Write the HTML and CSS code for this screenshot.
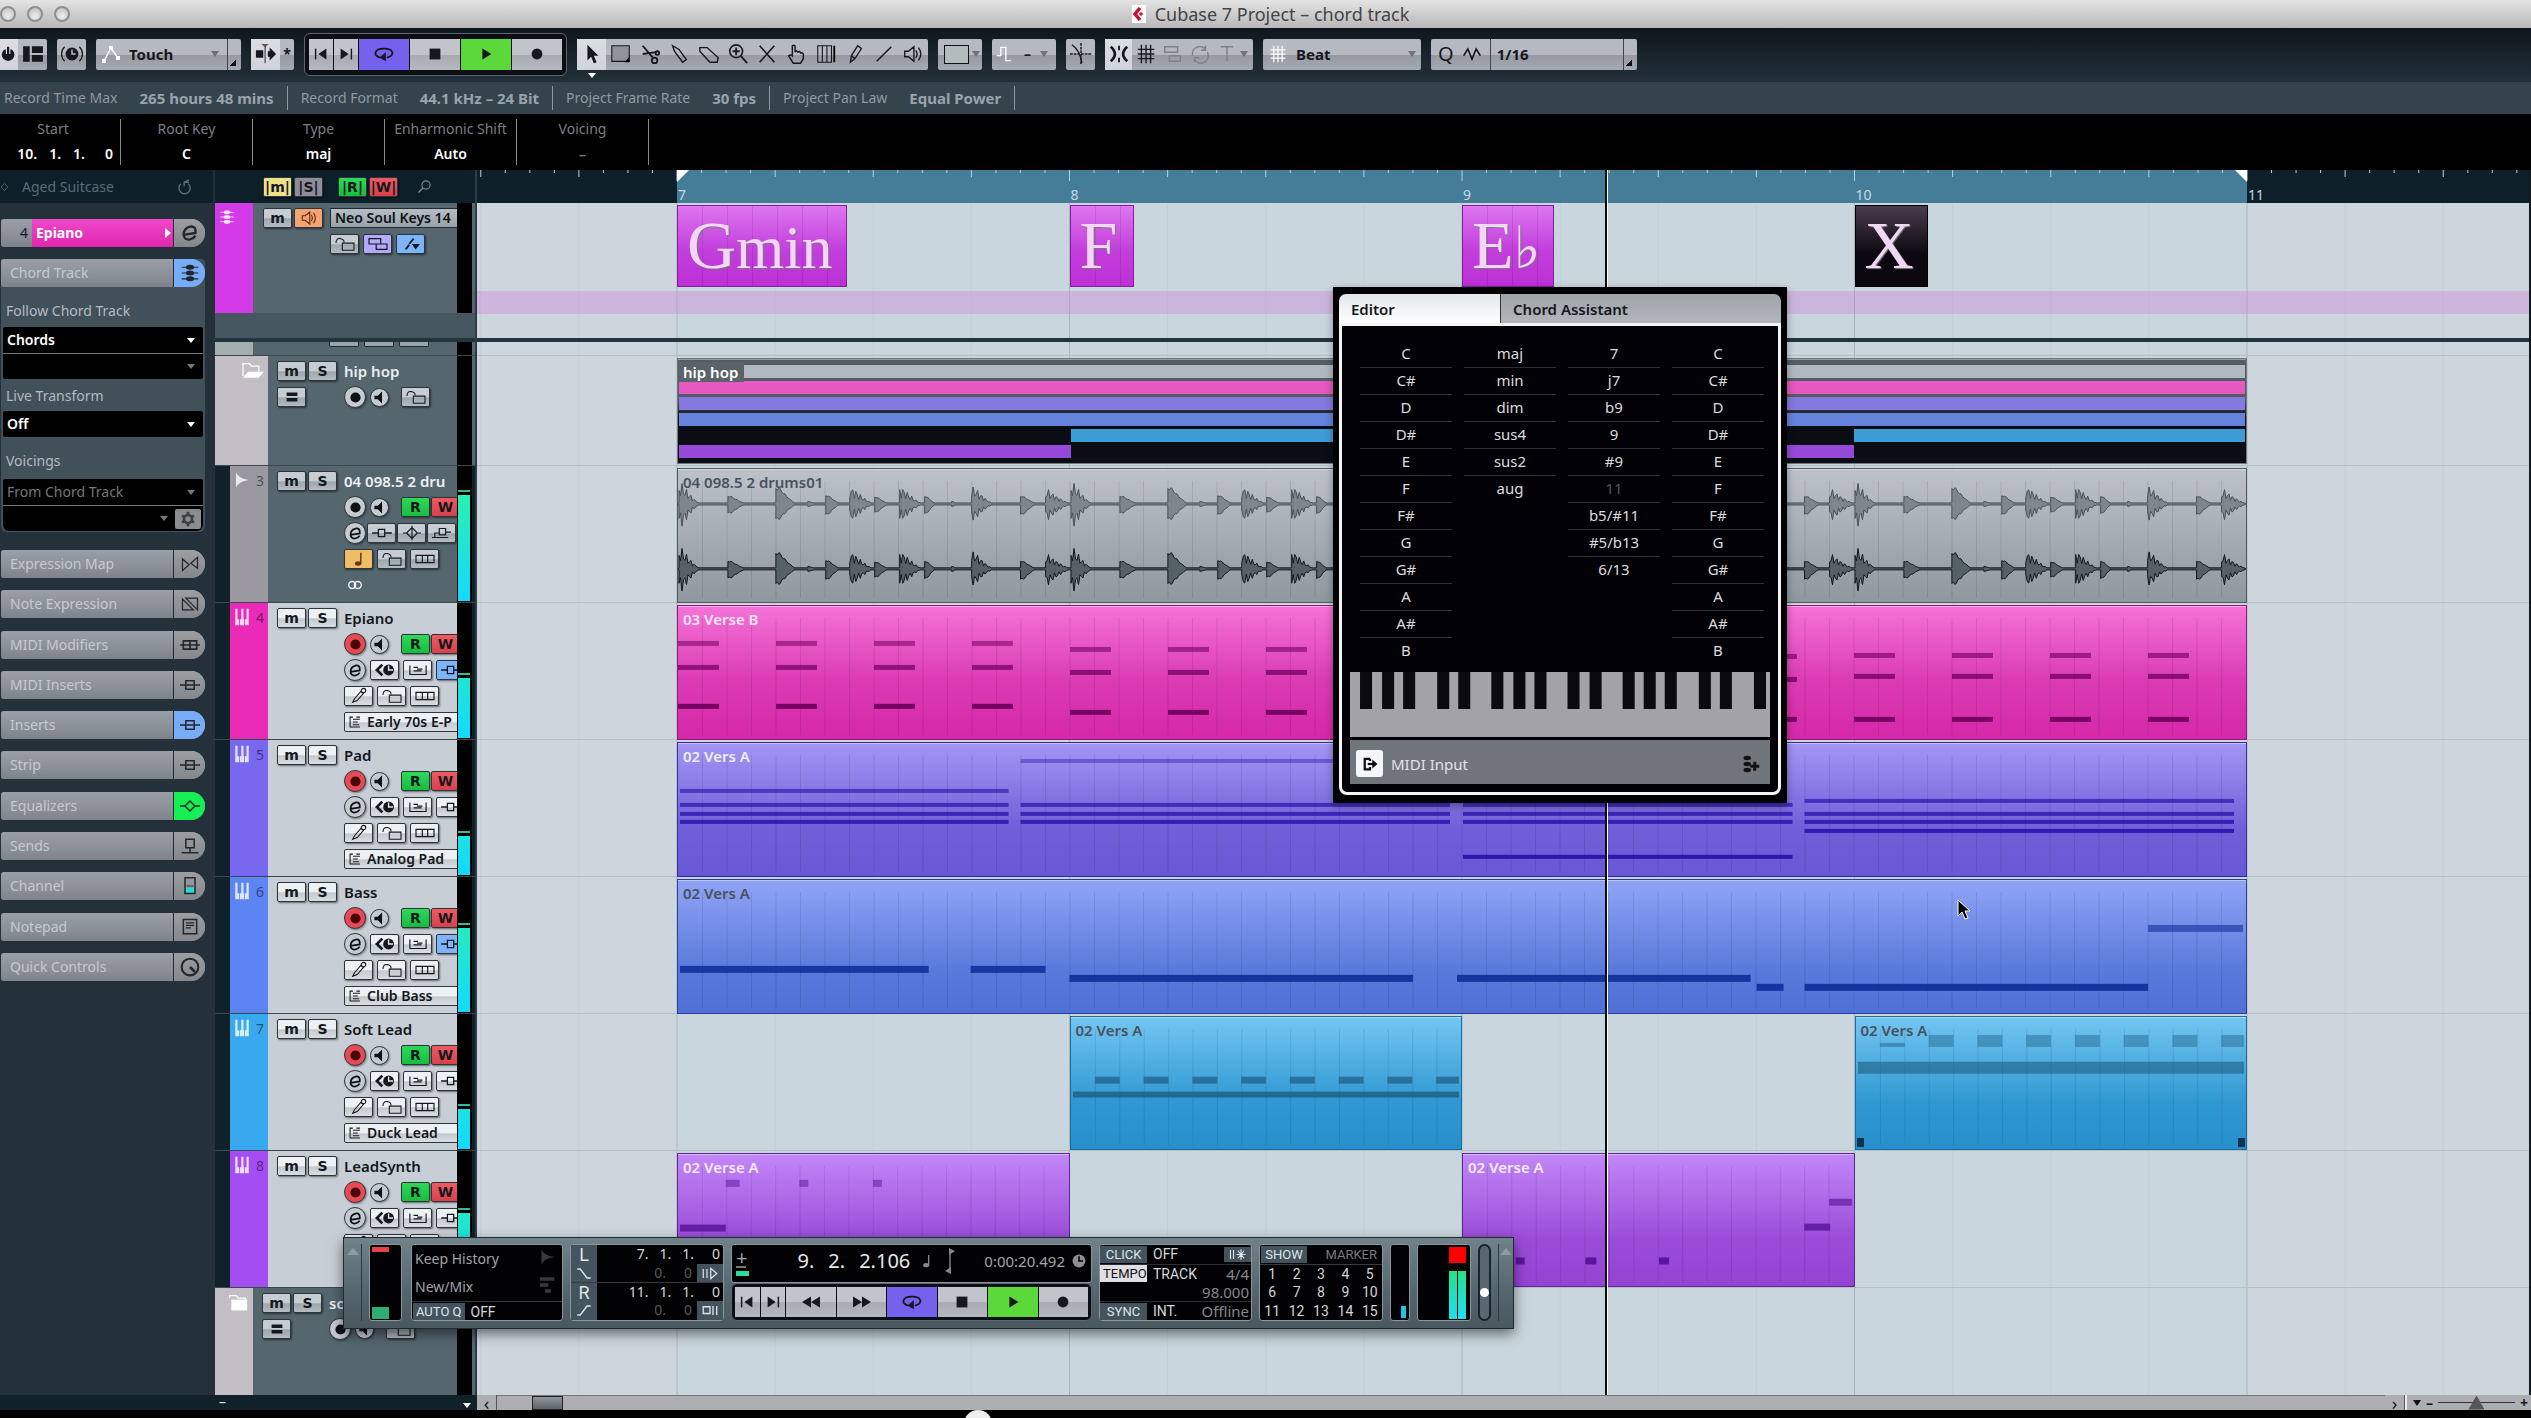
FILE: index.html
```html
<!DOCTYPE html>
<html lang="en">
<head>
  <meta charset="UTF-8" />
  <meta name="viewport" content="width=device-width, initial-scale=1.0" />
  <title>Cubase 7 Project – chord track</title>
  <link rel="stylesheet" href="styles.css">
</head>
<body>
  <!-- icon set -->
  <svg class="sprite" aria-hidden="true">
    <symbol id="i-power" viewBox="0 0 20 20"><path d="M5 5a7 7 0 1 0 8 0" fill="currentColor"/><path d="M9 1v9" stroke="#d6d9df" stroke-width="5"/><path d="M9 2v8" stroke="currentColor" stroke-width="2.5"/></symbol>
    <symbol id="i-layout" viewBox="0 0 20 20"><path d="M1 3h6v14H1zM9 3h10v6H9zM9 11h10v6H9z" fill="currentColor"/></symbol>
    <symbol id="i-clock" viewBox="0 0 24 24"><circle cx="12" cy="12" r="7" fill="currentColor"/><path d="M12 7v5h4" stroke="#b9bcc4" stroke-width="1.6" fill="none"/><path d="M4 4a11 11 0 0 0 0 16M20 4a11 11 0 0 1 0 16" stroke="currentColor" stroke-width="1.4" fill="none"/></symbol>
    <symbol id="i-watch" viewBox="0 0 20 20"><circle cx="10" cy="10" r="8" fill="currentColor"/><path d="M10 4v6h5" stroke="#000" stroke-width="2" fill="none"/></symbol>
    <symbol id="i-auto" viewBox="0 0 20 20"><path d="M3 17L10 4l7 10" stroke="#fff" stroke-width="1.4" fill="none"/><path d="M1 15h4v4H1zM8 2h4v4H8zM15 12h4v4h-4z" fill="#fff"/></symbol>
    <symbol id="i-scroll" viewBox="0 0 24 24"><path d="M1 8h8v8H1zM14 9h2V5l7 7-7 7v-4h-2z" fill="currentColor"/><path d="M11 4v18" stroke="currentColor"/><path d="M7 1h8l-4 4z" fill="#555"/></symbol>
    <symbol id="i-prev" viewBox="0 0 20 20"><path d="M4 4v12" stroke="currentColor" stroke-width="1.6"/><path d="M16 4v12l-9-6z" fill="currentColor"/></symbol>
    <symbol id="i-next" viewBox="0 0 20 20"><path d="M16 4v12" stroke="currentColor" stroke-width="1.6"/><path d="M4 4v12l9-6z" fill="currentColor"/></symbol>
    <symbol id="i-rew" viewBox="0 0 24 20"><path d="M12 4v12L2 10zM22 4v12l-10-6z" fill="currentColor"/></symbol>
    <symbol id="i-fwd" viewBox="0 0 24 20"><path d="M12 4v12l10-6zM2 4v12l10-6z" fill="currentColor"/></symbol>
    <symbol id="i-cycle" viewBox="0 0 24 20"><path d="M8 14C-1 12 1 4 12 4s13 8 3 10" stroke="currentColor" stroke-width="2" fill="none"/><path d="M14 8v10l-7-4z" fill="currentColor"/></symbol>
    <symbol id="i-stop" viewBox="0 0 20 20"><path d="M4 4h12v12H4z" fill="currentColor"/></symbol>
    <symbol id="i-play" viewBox="0 0 20 20"><path d="M6 4v12l10-6z" fill="currentColor"/></symbol>
    <symbol id="i-rec" viewBox="0 0 20 20"><circle cx="10" cy="10" r="6" fill="currentColor"/></symbol>
    <symbol id="i-arrow" viewBox="0 0 20 24"><path d="M5 2v17l4-4 3 7 3-1-3-7h5z" fill="currentColor"/></symbol>
    <symbol id="i-range" viewBox="0 0 24 24"><path d="M2 3h19v17H2z" fill="#8f949c" stroke="currentColor" stroke-width="1.2"/><path d="M21 15v6h-5z" fill="#000"/></symbol>
    <symbol id="i-scissors" viewBox="0 0 24 24"><path d="M4 3l12 14M4 12l15-2" stroke="currentColor" stroke-width="2"/><circle cx="17" cy="19" r="3" fill="none" stroke="currentColor" stroke-width="2"/><circle cx="20" cy="11" r="2" fill="none" stroke="currentColor" stroke-width="2"/></symbol>
    <symbol id="i-glue" viewBox="0 0 24 24"><path d="M5 3l2 6 9 12 4-3-8-11z" fill="none" stroke="currentColor" stroke-width="1.5"/></symbol>
    <symbol id="i-erase" viewBox="0 0 24 24"><path d="M2 5h8l12 11-1 5h-8L2 9z" fill="none" stroke="currentColor" stroke-width="1.5"/></symbol>
    <symbol id="i-zoom" viewBox="0 0 24 24"><circle cx="10" cy="9" r="7" fill="none" stroke="currentColor" stroke-width="1.8"/><path d="M15 14l7 8M6 9h8M10 5v8" stroke="currentColor" stroke-width="2"/></symbol>
    <symbol id="i-mute" viewBox="0 0 24 24"><path d="M4 3l16 18M20 3L4 21" stroke="currentColor" stroke-width="1.8"/></symbol>
    <symbol id="i-hand" viewBox="0 0 24 24"><path d="M8 14V3q2-1 3 0v7q1-3 3 0 2-2 3 1 2-1 3 1v5l-3 5H9l-5-8q2-2 4 0z" fill="none" stroke="currentColor" stroke-width="1.6"/></symbol>
    <symbol id="i-warp" viewBox="0 0 24 24"><path d="M3 3h15v18H3zM8 3v18M13 3v18" fill="none" stroke="currentColor" stroke-width="1.2"/><path d="M21 3v18" stroke="#000" stroke-width="2"/></symbol>
    <symbol id="i-pencil" viewBox="0 0 24 24"><path d="M7 21l1-7 7-11 4 3-7 11zM8 14l4 3" fill="none" stroke="currentColor" stroke-width="1.5"/></symbol>
    <symbol id="i-line" viewBox="0 0 24 24"><path d="M4 20L20 4" stroke="currentColor" stroke-width="1.6"/></symbol>
    <symbol id="i-speaker" viewBox="0 0 24 24"><path d="M3 9h4l6-5v16l-6-5H3zM15 8q3 4 0 8M18 5q5 7 0 14" fill="none" stroke="currentColor" stroke-width="1.5"/></symbol>
    <symbol id="i-spk" viewBox="0 0 20 20"><path d="M4 8h4l5-5v14l-5-5H4z" fill="currentColor"/></symbol>
    <symbol id="i-step" viewBox="0 0 24 24"><path d="M2 14h5V4h6v16h6" fill="none" stroke="#fff" stroke-width="1.6"/></symbol>
    <symbol id="i-cross" viewBox="0 0 24 24"><path d="M2 2q9 6 11 20" fill="none" stroke="currentColor" stroke-width="1.4"/><path d="M12 0v24M0 12h24" stroke="currentColor" stroke-width="1.6" stroke-dasharray="3 1"/></symbol>
    <symbol id="i-snap" viewBox="0 0 24 24"><path d="M3 4q9 8 0 16M21 4q-9 8 0 16" fill="none" stroke="currentColor" stroke-width="3"/><path d="M12 3v5M12 16v5" stroke="currentColor" stroke-width="2"/></symbol>
    <symbol id="i-grid" viewBox="0 0 24 24"><path d="M7 2v20M12 2v20M17 2v20M3 7h18M3 12h18M3 17h18" stroke="currentColor" stroke-width="1.5"/></symbol>
    <symbol id="i-stack" viewBox="0 0 24 24"><path d="M3 4h14v6H3zM8 14h12v6H8z" fill="none" stroke="currentColor" stroke-width="1.6"/></symbol>
    <symbol id="i-loop" viewBox="0 0 24 24"><path d="M4 14a8 8 0 0 1 14-7M20 10a8 8 0 0 1-14 8M18 3v5h-5M6 21v-5h5" fill="none" stroke="currentColor" stroke-width="1.6"/></symbol>
    <symbol id="i-tee" viewBox="0 0 24 24"><path d="M5 4h14M12 4v16" stroke="currentColor" stroke-width="1.6"/></symbol>
    <symbol id="i-wave" viewBox="0 0 24 24"><path d="M2 14l5-8 5 12 5-12 5 8" fill="none" stroke="currentColor" stroke-width="2"/></symbol>
    <symbol id="i-search" viewBox="0 0 20 20"><circle cx="12" cy="8" r="5.5" fill="none" stroke="currentColor" stroke-width="1.5"/><path d="M8 12l-6 6" stroke="currentColor" stroke-width="2"/></symbol>
    <symbol id="i-reset" viewBox="0 0 20 20"><path d="M5 6a7 7 0 1 0 9 0M15 1l-6 3v5M9 4h6" fill="none" stroke="currentColor" stroke-width="1.8"/></symbol>
    <symbol id="i-diamond" viewBox="0 0 20 20"><path d="M9 3l7 7-7 7-7-7z" fill="none" stroke="currentColor" stroke-width="1.5"/></symbol>
    <symbol id="i-e" viewBox="0 0 24 24"><path d="M5 14l13-2q1-8-6-7-7 2-7 9 1 6 7 5 4-1 6-4" fill="none" stroke="currentColor" stroke-width="2.5"/></symbol>
    <symbol id="i-chord" viewBox="0 0 24 24"><path d="M2 5h20M2 12h20M2 19h20" stroke="currentColor" stroke-width="1.3"/><ellipse cx="12" cy="5" rx="5" ry="3" fill="currentColor"/><ellipse cx="12" cy="12" rx="5" ry="3" fill="currentColor"/><ellipse cx="12" cy="19" rx="5" ry="3" fill="currentColor"/></symbol>
    <symbol id="i-gear" viewBox="0 0 24 24"><circle cx="12" cy="12" r="6" fill="none" stroke="currentColor" stroke-width="4"/><path d="M12 1v5M12 18v5M3 7l4 2M17 15l4 2M3 17l4-2M17 9l4-2" stroke="currentColor" stroke-width="4"/></symbol>
    <symbol id="i-exprmap" viewBox="0 0 24 24"><path d="M3 6v14l8-7zM21 4v13l-8-6z" fill="none" stroke="currentColor" stroke-width="1.5"/></symbol>
    <symbol id="i-noteexpr" viewBox="0 0 24 24"><path d="M3 6v13h13zM7 5h14v14z" fill="none" stroke="currentColor" stroke-width="1.5"/></symbol>
    <symbol id="i-modif" viewBox="0 0 24 24"><path d="M0 12h24M4 7h16v10H4zM12 7v10" fill="none" stroke="currentColor" stroke-width="2"/></symbol>
    <symbol id="i-insert" viewBox="0 0 24 24"><path d="M0 12h24M7 7h10v10H7z" fill="none" stroke="currentColor" stroke-width="1.8"/></symbol>
    <symbol id="i-eq" viewBox="0 0 24 24"><path d="M0 12h6l6-6 6 6-6 6-6-6M18 12h6" fill="none" stroke="currentColor" stroke-width="1.7"/></symbol>
    <symbol id="i-send" viewBox="0 0 24 24"><path d="M7 4h10v10H7zM12 14v6M2 20h20" fill="none" stroke="currentColor" stroke-width="1.8"/></symbol>
    <symbol id="i-channel" viewBox="0 0 24 24"><path d="M7 14h10v6H7z" fill="#1fe0d8"/><path d="M6 2h12v19H6z" fill="none" stroke="currentColor" stroke-width="1.8"/><path d="M8 12h8" stroke="currentColor"/></symbol>
    <symbol id="i-notepad" viewBox="0 0 24 24"><path d="M4 3h16v17H4z" fill="none" stroke="currentColor" stroke-width="1.8"/><path d="M7 7h10M7 10h10M7 13h6" stroke="currentColor" stroke-width="1.6"/></symbol>
    <symbol id="i-knob" viewBox="0 0 24 24"><circle cx="12" cy="12" r="10" fill="none" stroke="currentColor" stroke-width="2.5"/><path d="M12 12l6 6" stroke="currentColor" stroke-width="3"/></symbol>
    <symbol id="i-lock" viewBox="0 0 26 20"><path d="M3 9q0-6 5-5 4 1 4 4M10 9h13v8H10z" fill="none" stroke="currentColor" stroke-width="1.2"/></symbol>
    <symbol id="i-lanes" viewBox="0 0 26 20"><path d="M3 6h20v8H3zM10 6v8M16 6v8" fill="none" stroke="currentColor" stroke-width="1.3"/></symbol>
    <symbol id="i-boxes" viewBox="0 0 26 20"><path d="M3 4h13v6H3zM11 10h12v6H11z" fill="none" stroke="currentColor" stroke-width="1.3"/></symbol>
    <symbol id="i-map" viewBox="0 0 26 20"><path d="M7 16l4-5M11 10l5-6" stroke="currentColor" stroke-width="2"/><path d="M14 10h9l-5 6z" fill="currentColor"/></symbol>
    <symbol id="i-equal" viewBox="0 0 26 20"><path d="M7 7h12M7 13h12" stroke="currentColor" stroke-width="4"/></symbol>
    <symbol id="i-ms" viewBox="0 0 26 20"><path d="M10 4l-6 6 6 6" fill="none" stroke="currentColor" stroke-width="3"/><circle cx="17" cy="10" r="6" fill="currentColor"/><path d="M17 5v5h5" fill="none" stroke="#e5e8ec" stroke-width="1.5"/></symbol>
    <symbol id="i-shelf" viewBox="0 0 26 20"><path d="M4 5v10h18V5M8 7h5M8 11h9M12 9h6" fill="none" stroke="currentColor" stroke-width="1.3"/></symbol>
    <symbol id="i-ins" viewBox="0 0 26 20"><path d="M2 10h7M16 10h8M9 6h7v8H9z" fill="none" stroke="currentColor" stroke-width="1.4"/></symbol>
    <symbol id="i-dia" viewBox="0 0 26 20"><path d="M3 10h4l6-6 6 6-6 6-6-6M13 2v16M19 10h4" fill="none" stroke="currentColor" stroke-width="1.3"/></symbol>
    <symbol id="i-snd" viewBox="0 0 26 20"><path d="M2 15h18M10 5h7v7h-7zM5 15v-5h5M17 9h6" fill="none" stroke="currentColor" stroke-width="1.3"/></symbol>
    <symbol id="i-dagger" viewBox="0 0 26 20"><path d="M6 17l2-4 7-8 3 2-7 8z" fill="none" stroke="currentColor" stroke-width="1.2"/><circle cx="18" cy="4" r="2.5" fill="none" stroke="currentColor" stroke-width="1.2"/></symbol>
    <symbol id="i-note" viewBox="0 0 26 20"><path d="M15 3v12" stroke="currentColor" stroke-width="1.6"/><ellipse cx="12" cy="15" rx="3.5" ry="2.5" fill="currentColor"/></symbol>
    <symbol id="i-rings" viewBox="0 0 26 20"><circle cx="9" cy="10" r="5" fill="none" stroke="currentColor" stroke-width="2"/><circle cx="17" cy="10" r="5" fill="none" stroke="currentColor" stroke-width="2"/></symbol>
    <symbol id="i-program" viewBox="0 0 20 20"><path d="M7 3H3v14h14M7 6h10M7 10h7M7 14h9M12 3h5" fill="none" stroke="currentColor" stroke-width="1.5"/></symbol>
    <symbol id="i-keys" viewBox="0 0 20 24"><path d="M1 1h3v14h2v8H1zM8 15h1V1h3v14h1v8H7V15zM16 1h3v22h-5v-8h2z" fill="currentColor"/></symbol>
    <symbol id="i-folder" viewBox="0 0 30 24"><path d="M3 18V3h8l2 3h9v7" fill="none" stroke="#fff" stroke-width="1.5"/><path d="M3 20l6-7h19l-6 7z" fill="#fff"/></symbol>
    <symbol id="i-folder-shut" viewBox="0 0 30 24"><path d="M5 6V3h8l2 3h9v4" fill="none" stroke="#fff" stroke-width="1.5"/><path d="M7 8h19v13H7z" fill="#fff"/></symbol>
    <symbol id="i-wavemark" viewBox="0 0 20 24"><path d="M2 2q3 8 17 10Q5 14 2 22z" fill="currentColor"/></symbol>
    <symbol id="i-midi-in" viewBox="0 0 24 24"><path d="M12 5H5v14h7v-3M12 5v3" fill="none" stroke="currentColor" stroke-width="3"/><path d="M9 12h8" stroke="currentColor" stroke-width="3"/><path d="M15 6l7 6-7 6z" fill="currentColor"/></symbol>
    <symbol id="i-add-chord" viewBox="0 0 24 24"><ellipse cx="7" cy="4" rx="5" ry="3" fill="currentColor"/><ellipse cx="7" cy="12" rx="5" ry="3" fill="currentColor"/><ellipse cx="7" cy="20" rx="5" ry="3" fill="currentColor"/><path d="M17 9v12M11 15h12" stroke="currentColor" stroke-width="4"/></symbol>
    <symbol id="i-down" viewBox="0 0 24 20"><path d="M3 4h4l9 12h5" fill="none" stroke="currentColor" stroke-width="1.8"/></symbol>
    <symbol id="i-up" viewBox="0 0 24 20"><path d="M3 16h4l9-12h5" fill="none" stroke="currentColor" stroke-width="1.8"/></symbol>
    <symbol id="i-preroll" viewBox="0 0 24 20"><path d="M3 4v12M8 4v12M13 3v14l8-7z" fill="none" stroke="currentColor" stroke-width="1.6"/></symbol>
    <symbol id="i-postroll" viewBox="0 0 24 20"><path d="M3 5h9v9H3zM16 4v12M21 4v12" fill="none" stroke="currentColor" stroke-width="1.8"/></symbol>
    <symbol id="i-star" viewBox="0 0 24 20"><path d="M2 4v12M6 4v12M16 3v14M10 10h12M12 5l8 10M20 5l-8 10" stroke="currentColor" stroke-width="1.5"/></symbol>
    <symbol id="i-steps" viewBox="0 0 20 20"><path d="M1 3h17M1 10h10M7 17h7" stroke="currentColor" stroke-width="4"/></symbol>
    <symbol id="i-updown" viewBox="0 0 12 28"><path d="M6 4v20" stroke="currentColor" stroke-width="1.4"/><path d="M5 1l6 3-6 4zM7 27l-6-3 6-4z" fill="currentColor"/></symbol>
  </svg>

  <header class="titlebar">
    <div class="lights"><button aria-label="Close"></button><button aria-label="Minimize"></button><button aria-label="Zoom"></button></div>
    <h1><svg class="doc" viewBox="0 0 14 18"><path d="M0 0h14v18H0z" fill="#fff"/><path d="M8 3L3 9l5 6" stroke="#c8102e" stroke-width="3.5" fill="none"/><circle cx="9" cy="9" r="1.8" fill="#c8102e"/></svg>Cubase 7 Project – chord track</h1>
  </header>

  <!-- toolbar -->
  <div class="toolbar">
    <div class="group">
      <button class="tool w18 on" aria-label="Activate"><svg><use href="#i-power"/></svg></button>
      <button class="tool" aria-label="Window layout"><svg><use href="#i-layout"/></svg></button>
    </div>
    <button class="group tool" aria-label="Delay compensation"><svg><use href="#i-clock"/></svg></button>
    <label class="group pick w145"><svg><use href="#i-auto"/></svg><select aria-label="Automation mode"><option>Touch</option></select><i class="tri"></i><i class="corner"></i></label>
    <div class="group">
      <button class="tool on" aria-label="Auto-scroll"><svg><use href="#i-scroll"/></svg></button>
      <button class="tool w14" aria-label="Suspend auto-scroll">*</button>
    </div>
    <div class="transport-keys">
      <button class="w25" aria-label="Previous marker"><svg><use href="#i-prev"/></svg></button>
      <button class="w25" aria-label="Next marker"><svg><use href="#i-next"/></svg></button>
      <button class="cycle" aria-label="Cycle"><svg><use href="#i-cycle"/></svg></button>
      <button aria-label="Stop"><svg><use href="#i-stop"/></svg></button>
      <button class="play" aria-label="Play"><svg><use href="#i-play"/></svg></button>
      <button aria-label="Record"><svg><use href="#i-rec"/></svg></button>
    </div>
    <div class="group tools">
      <button class="tool on selected" aria-label="Object selection"><svg><use href="#i-arrow"/></svg></button>
      <button class="tool" aria-label="Range selection"><svg><use href="#i-range"/></svg></button>
      <button class="tool" aria-label="Split"><svg><use href="#i-scissors"/></svg></button>
      <button class="tool" aria-label="Glue"><svg><use href="#i-glue"/></svg></button>
      <button class="tool" aria-label="Erase"><svg><use href="#i-erase"/></svg></button>
      <button class="tool" aria-label="Zoom"><svg><use href="#i-zoom"/></svg></button>
      <button class="tool" aria-label="Mute"><svg><use href="#i-mute"/></svg></button>
      <button class="tool" aria-label="Comp"><svg><use href="#i-hand"/></svg></button>
      <button class="tool" aria-label="Time warp"><svg><use href="#i-warp"/></svg></button>
      <button class="tool" aria-label="Draw"><svg><use href="#i-pencil"/></svg></button>
      <button class="tool" aria-label="Line"><svg><use href="#i-line"/></svg></button>
      <button class="tool" aria-label="Play tool"><svg><use href="#i-speaker"/></svg></button>
    </div>
    <button class="group color-menu" aria-label="Color menu"><span class="swatch"></span><i class="tri"></i></button>
    <button class="group nudge" aria-label="Nudge"><svg><use href="#i-step"/></svg><b>–</b><i class="tri"></i></button>
    <button class="group tool" aria-label="Snap to zero crossing"><svg><use href="#i-cross"/></svg></button>
    <div class="group snap">
      <button class="tool on" aria-label="Snap"><svg><use href="#i-snap"/></svg></button>
      <button class="tool" aria-label="Snap type"><svg><use href="#i-grid"/></svg></button>
      <button class="tool dim" aria-label="Relative"><svg><use href="#i-stack"/></svg></button>
      <button class="tool dim" aria-label="Shuffle"><svg><use href="#i-loop"/></svg></button>
      <button class="tool dim" aria-label="Events"><svg><use href="#i-tee"/></svg></button>
      <i class="tri"></i>
    </div>
    <label class="group pick w158 light"><svg><use href="#i-grid"/></svg><select aria-label="Grid type"><option>Beat</option></select><i class="tri"></i></label>
    <label class="group pick w206"><span class="q">Q</span><svg><use href="#i-wave"/></svg><select class="ruled" aria-label="Quantize"><option>1/16</option></select><i class="corner"></i></label>
  </div>

  <dl class="status">
    <div><dt>Record Time Max</dt><dd>265 hours 48 mins</dd></div>
    <div><dt>Record Format</dt><dd>44.1 kHz – 24 Bit</dd></div>
    <div><dt>Project Frame Rate</dt><dd>30 fps</dd></div>
    <div><dt>Project Pan Law</dt><dd>Equal Power</dd></div>
  </dl>

  <dl class="infoline">
    <div class="start"><dt>Start</dt><dd><span>10.</span><span>1.</span><span>1.</span><span>0</span></dd></div>
    <div><dt>Root Key</dt><dd>C</dd></div>
    <div><dt>Type</dt><dd>maj</dd></div>
    <div><dt>Enharmonic Shift</dt><dd>Auto</dd></div>
    <div><dt>Voicing</dt><dd class="dim">–</dd></div>
  </dl>

  <main class="workspace">
    <!-- inspector -->
    <aside class="inspector">
      <div class="insp-head"><svg><use href="#i-diamond"/></svg><span>Aged Suitcase</span><svg><use href="#i-reset"/></svg></div>
      <div class="insp-body">
        <div class="tab current"><span class="num">4</span><span class="tab-name">Epiano<i></i></span><button aria-label="Edit channel"><svg><use href="#i-e"/></svg></button></div>
        <section class="chord-section">
          <button class="tab blue"><span>Chord Track</span><span class="cap"><svg><use href="#i-chord"/></svg></span></button>
          <label for="follow">Follow Chord Track</label>
          <div class="combo"><div class="field"><select id="follow"><option>Chords</option></select></div><div class="field faint"><select aria-label="Follow scale"><option></option></select></div></div>
          <label for="live">Live Transform</label>
          <div class="combo"><div class="field"><select id="live"><option>Off</option></select></div></div>
          <label class="tall" for="voicings">Voicings</label>
          <div class="combo last"><div class="field faint"><select id="voicings"><option>From Chord Track</option></select></div><div class="field faint geared"><select aria-label="Voicing set"><option></option></select><button aria-label="Voicing setup"><svg><use href="#i-gear"/></svg></button></div></div>
        </section>
        <nav class="tabs">
          <button class="tab"><span>Expression Map</span><span class="cap"><svg><use href="#i-exprmap"/></svg></span></button>
          <button class="tab"><span>Note Expression</span><span class="cap"><svg><use href="#i-noteexpr"/></svg></span></button>
          <button class="tab"><span>MIDI Modifiers</span><span class="cap"><svg><use href="#i-modif"/></svg></span></button>
          <button class="tab"><span>MIDI Inserts</span><span class="cap"><svg><use href="#i-insert"/></svg></span></button>
          <button class="tab blue"><span>Inserts</span><span class="cap"><svg><use href="#i-insert"/></svg></span></button>
          <button class="tab"><span>Strip</span><span class="cap"><svg><use href="#i-insert"/></svg></span></button>
          <button class="tab green"><span>Equalizers</span><span class="cap"><svg><use href="#i-eq"/></svg></span></button>
          <button class="tab"><span>Sends</span><span class="cap"><svg><use href="#i-send"/></svg></span></button>
          <button class="tab"><span>Channel</span><span class="cap"><svg><use href="#i-channel"/></svg></span></button>
          <button class="tab"><span>Notepad</span><span class="cap"><svg><use href="#i-notepad"/></svg></span></button>
          <button class="tab"><span>Quick Controls</span><span class="cap"><svg><use href="#i-knob"/></svg></span></button>
        </nav>
      </div>
    </aside>

    <!-- track list -->
    <section class="tracklist" id="tracklist">
      <div class="list-head">
        <button class="key yellow">|m|</button><button class="key grey">|S|</button>
        <button class="key green apart">|R|</button><button class="key red">|W|</button>
        <svg class="find"><use href="#i-search"/></svg>
      </div>
      <div class="row chord-row">
        <div class="strip magenta"><svg><use href="#i-chord"/></svg></div>
        <div class="chord-ctl">
          <div class="line"><button class="key">m</button><button class="key orange" aria-label="Monitor chords"><svg><use href="#i-speaker"/></svg></button><span class="out">Neo Soul Keys 14</span></div>
          <div class="line inner"><button class="key" aria-label="Lock"><svg><use href="#i-lock"/></svg></button><button class="key violet" aria-label="Resolve"><svg><use href="#i-boxes"/></svg></button><button class="key sky" aria-label="Mapping"><svg><use href="#i-map"/></svg></button></div>
        </div>
        <div class="meter"></div>
      </div>
      <div class="split"></div>
      <div class="row stub"><div class="strip"></div><div class="stub-ctl"><i></i><i></i><i></i></div><div class="meter"></div></div>
    </section>

    <!-- arrangement -->
    <section class="arrange" id="arrange">
      <svg class="gridlines" id="gridlines" preserveAspectRatio="none"></svg>
      <div class="ruler bars" id="ruler"></div>
      <div class="lane chord-lane bars">
        <div class="chord c7 w170">G<small>min</small></div>
        <div class="chord c8 w64">F</div>
        <div class="chord c9 w92">E<span class="flat">♭</span></div>
        <div class="chord c10 w73 none">X</div>
        <div class="scale-band"></div>
      </div>
      <div class="split"></div>
      <div class="lane stub-lane"></div>
      <div class="lane folder-lane bars">
        <div class="clip folder-clip">
          <span class="clip-name">hip hop</span>
          <i class="part grey"></i><i class="part pink"></i><i class="part lilac"></i><i class="part blue"></i>
          <div class="quarters"><i class="part cyan q2"></i><i class="part cyan q4"></i></div>
          <div class="quarters"><i class="part violet q1"></i><i class="part violet q3"></i></div>
        </div>
      </div>
      <div class="playhead"></div>

      <!-- chord editor -->
      <div class="chord-editor">
        <div class="ed-tabs"><button class="active">Editor</button><button>Chord Assistant</button></div>
        <div class="ed-body">
          <div class="ed-cols" id="chordCols"></div>
          <svg class="piano" id="piano" viewBox="0 0 419 65" preserveAspectRatio="none"></svg>
          <div class="midi-in"><button aria-label="MIDI Input"><svg><use href="#i-midi-in"/></svg></button><span>MIDI Input</span><svg><use href="#i-add-chord"/></svg></div>
        </div>
      </div>
      <svg class="cursor" viewBox="0 0 14 22"><path d="M1 1v16l4-4 3 7 3-1-3-7h5z" fill="#000" stroke="#fff"/></svg>
    </section>

    <!-- transport panel -->
    <section class="transport">
      <div class="grip"><i></i></div>
      <div class="panel cpu"><i class="peak"></i><i class="load"></i></div>
      <div class="panel history">
        <div><span>Keep History</span><svg><use href="#i-wavemark"/></svg></div>
        <div><span>New/Mix</span><svg><use href="#i-steps"/></svg></div>
        <div class="foot"><button class="tag">AUTO Q</button><b>OFF</b></div>
      </div>
      <div class="panel locators">
        <div><button class="tag big">L</button><span class="pos"><i>7.</i><i>1.</i><i>1.</i><i>0</i></span></div>
        <div class="off"><button class="tag" aria-label="Punch in"><svg><use href="#i-down"/></svg></button><span class="pos short"><i>0.</i><i>0</i></span><button class="tag" aria-label="Pre-roll"><svg><use href="#i-preroll"/></svg></button></div>
        <div><button class="tag big">R</button><span class="pos"><i>11.</i><i>1.</i><i>1.</i><i>0</i></span></div>
        <div class="off"><button class="tag" aria-label="Punch out"><svg><use href="#i-up"/></svg></button><span class="pos short"><i>0.</i><i>0</i></span><button class="tag" aria-label="Post-roll"><svg><use href="#i-postroll"/></svg></button></div>
      </div>
      <div class="deck">
        <div class="panel time">
          <span class="plus">+<i></i><i class="lit"></i></span>
          <span class="now"><b>9.</b><b>2.</b><b>2.106</b></span>
          <svg class="quaver"><use href="#i-note"/></svg><svg class="updown"><use href="#i-updown"/></svg>
          <span class="clock">0:00:20.492</span><svg class="watch"><use href="#i-watch"/></svg>
        </div>
        <div class="transport-keys">
          <button class="w25" aria-label="Go to start"><svg><use href="#i-prev"/></svg></button>
          <button class="w25" aria-label="Go to end"><svg><use href="#i-next"/></svg></button>
          <button aria-label="Rewind"><svg><use href="#i-rew"/></svg></button>
          <button aria-label="Forward"><svg><use href="#i-fwd"/></svg></button>
          <button class="cycle" aria-label="Cycle"><svg><use href="#i-cycle"/></svg></button>
          <button aria-label="Stop"><svg><use href="#i-stop"/></svg></button>
          <button class="play" aria-label="Play"><svg><use href="#i-play"/></svg></button>
          <button aria-label="Record"><svg><use href="#i-rec"/></svg></button>
        </div>
      </div>
      <div class="panel click">
        <div><button class="tag">CLICK</button><b>OFF</b><button class="tag icon" aria-label="Precount"><svg><use href="#i-star"/></svg></button></div>
        <div class="ruled"><button class="tag lit">TEMPO</button><b>TRACK</b><em>4/4</em></div>
        <div><em>98.000</em></div>
        <div class="ruled"><button class="tag">SYNC</button><b>INT.</b><em>Offline</em></div>
      </div>
      <div class="panel marker">
        <div class="head"><button class="tag">SHOW</button><span>MARKER</span></div>
        <div class="nums"><button>1</button><button>2</button><button>3</button><button>4</button><button>5</button><button>6</button><button>7</button><button>8</button><button>9</button><button>10</button><button>11</button><button>12</button><button>13</button><button>14</button><button>15</button></div>
      </div>
      <div class="panel activity"><i></i></div>
      <div class="panel output"><i class="clipled"></i><i class="left"></i><i class="right"></i></div>
      <div class="fader"><i></i></div>
      <div class="grip right"><i></i></div>
    </section>
  </main>

  <div class="scrollbar">
    <div class="list-foot"><span>–</span><i></i></div>
    <button aria-label="Scroll left">‹</button>
    <div class="rail"><i></i></div>
    <button aria-label="Scroll right">›</button>
    <div class="zoomer"><i class="tri"></i><span>–</span><div class="rod"><i></i></div><span>+</span></div>
  </div>
  <footer class="base"><i></i></footer>

  <script src="script.js"></script>
</body>
</html>
```
FILE: styles.css
```css
* {
  box-sizing: border-box;
}

body {
  margin: 0;
  min-height: 100vh;
  display: flex;
  flex-direction: column;
  background: #000;
  color: #c6cdd3;
  font: 14px/20px "Noto Sans", "Open Sans", sans-serif;
  overflow: hidden;
}

button, select {
  font: inherit;
  color: inherit;
  border: 0;
  padding: 0;
  margin: 0;
  background: none;
  border-radius: 0;
}
select { appearance: none; min-width: 0; flex: 1; }
dl, dd, h1 { margin: 0; }
svg { display: block; }
.sprite { display: none; }

/* title bar */
.titlebar {
  height: 28px;
  display: flex;
  align-items: center;
  background: linear-gradient(#e4e4e4, #b9b7b9);
  color: #444;
}
.lights { display: flex; gap: 11px; width: 80px; }
.lights button {
  width: 16px;
  height: 16px;
  border-radius: 50%;
  border: 2px solid #8f8f8f;
  background: radial-gradient(circle at 50% 70%, #eee, #bbb);
}
.titlebar h1 {
  flex: 1;
  display: flex;
  justify-content: center;
  align-items: center;
  gap: 9px;
  padding-right: 70px;
  font-size: 18px;
  font-weight: 400;
}
.doc { width: 14px; height: 18px; }

/* toolbar */
.toolbar {
  height: 54px;
  padding-bottom: 2px;
  display: flex;
  align-items: center;
  gap: 10px;
  background: linear-gradient(#0f171d, #22303a);
  color: #15181c;
}
.group {
  height: 31px;
  display: flex;
  align-items: center;
  border-radius: 2px;
  background: linear-gradient(#b6b9c1 0 50%, #9599a2 52%, #a6aab2);
}
.tool {
  width: 29px;
  height: 31px;
  display: flex;
  align-items: center;
  justify-content: center;
  font-weight: 700;
}
.tool svg { width: 22px; height: 22px; }
.tool.on { background: linear-gradient(#dcdee4, #cfd2d9); }
.tool.dim { color: #7d818a; }
.tools { width: 351px; justify-content: space-between; }
.snap { width: 148px; }
.snap .tool { width: 27px; }
.w14 { width: 14px; }
.w18 { width: 18px; }
.pick { padding: 0 5px; gap: 8px; }
.pick svg { width: 20px; height: 20px; }
.pick select { font-size: 15px; font-weight: 700; }
.pick.light svg { color: #fff; }
.w145 { width: 145px; }
.w158 { width: 158px; }
.w206 { width: 206px; }
.q { font-size: 20px; padding-left: 2px; }
.ruled { align-self: stretch; }
.pick .ruled { border-left: 1px solid #444; padding-left: 6px; }
.tri {
  border: 4px solid transparent;
  border-top: 6px solid #6d717a;
  border-bottom: 0;
}
.corner {
  width: 9px;
  height: 31px;
  border-left: 1px solid #444;
  background: linear-gradient(135deg, transparent 50%, #111 50%) 100% 85% / 6px 7px no-repeat;
}
.transport-keys {
  display: flex;
  gap: 1px;
  padding: 5px 4px;
  border: 1px solid #5b6670;
  border-radius: 6px;
  background: #0b0f14;
  color: #15181c;
}
.transport-keys button {
  width: 50px;
  height: 31px;
  display: grid;
  place-items: center;
  background: linear-gradient(#c2c4cb 0 50%, #a9abb3 52%, #b6b8bf);
}
.transport-keys svg { width: 22px; height: 18px; }
.transport-keys .w25 { width: 24px; }
.transport-keys .cycle { background: #7262ee; }
.transport-keys .play { background: #5bd93a; }
.selected { position: relative; }
.selected::after {
  content: "";
  position: absolute;
  top: 34px;
  border: 4px solid transparent;
  border-top: 5px solid #fff;
  border-bottom: 0;
}
.color-menu { width: 44px; gap: 3px; padding-left: 6px; }
.swatch { width: 25px; height: 19px; border: 1px solid #111; background: #b1bcbe; }
.nudge { width: 64px; gap: 9px; padding-left: 3px; }
.nudge svg { width: 20px; height: 22px; }

/* status and info lines */
.status {
  height: 32px;
  display: flex;
  align-items: center;
  background: #35434d;
  color: #8e9aa3;
}
.status div {
  display: flex;
  gap: 22px;
  padding: 2px 13px;
  border-right: 1px solid #8e9aa3;
}
.status div:first-child { padding-left: 4px; }
.status dd { font-size: 15px; font-weight: 700; color: #98a4ad; }

.infoline {
  height: 56px;
  display: flex;
  padding: 5px 0;
  background: #000;
  text-align: center;
}
.infoline div {
  width: 132px;
  border-right: 1px solid #888;
  display: flex;
  flex-direction: column;
  gap: 5px;
}
.infoline .start { width: 121px; }
.infoline dt { color: #7e7e82; }
.infoline dd { color: #fff; font-weight: 600; }
.infoline .dim { color: #777; }
.start dd { display: flex; gap: 12px; justify-content: flex-end; padding-right: 7px; }
.start dd span:last-child { padding-left: 8px; }
.start dt { padding-right: 14px; }

/* workspace */
.workspace {
  flex: 1;
  display: flex;
  position: relative;
  background: #10212a;
}

/* inspector */
.inspector { width: 215px; background: #24303a; display: flex; flex-direction: column; }
.insp-head {
  height: 33px;
  display: flex;
  align-items: center;
  gap: 12px;
  padding: 0 20px 0 0;
  background: #0d202a;
  border-right: 2px solid #1d3038;
  color: #5b6c76;
}
.insp-head span { flex: 1; }
.insp-head svg { width: 16px; height: 16px; }
.insp-head svg:first-child { width: 10px; }
.insp-body { padding: 16px 10px 0 1px; }
.tab {
  width: 100%;
  height: 28px;
  display: flex;
  align-items: stretch;
  border-radius: 3px 15px 15px 3px;
  overflow: hidden;
  background: linear-gradient(#9a9fa7, #8b9098 60%, #7d838a);
  color: #c5cad0;
  line-height: 28px;
  text-align: left;
}
.tab > span:first-child { flex: 1; padding-left: 9px; }
.cap, .current button {
  width: 32px;
  display: grid;
  place-items: center;
  border-left: 1px solid #222b33;
  background: linear-gradient(#9c9ea2, #84878b);
  color: #22272c;
}
.cap svg { width: 20px; height: 20px; }
.blue .cap { background: #78acf8; }
.green .cap { background: #16ee54; }
.current { color: #fff; font-weight: 700; margin-bottom: 12px; }
.tab.current > .num { width: 31px; flex: none; color: #16191d; font-weight: 400; padding-left: 19px; }
.tab-name {
  flex: 1;
  display: flex;
  justify-content: space-between;
  align-items: center;
  padding: 0 2px 0 4px;
  background: linear-gradient(#ee48cb, #e026ae);
}
.tab-name i { border: 5px solid transparent; border-left: 6px solid #fff; border-right: 0; }
.current svg { width: 22px; height: 22px; }
.chord-section {
  background: #42505a;
  border-radius: 4px 4px 6px 6px;
  padding-bottom: 1px;
  margin-bottom: 18px;
}
.chord-section label {
  display: block;
  padding: 12px 5px 3px;
  height: 40px;
  line-height: 24px;
  color: #b3bac1;
}
.chord-section label[for="live"] { height: 32px; padding-top: 5px; }
.chord-section label.tall { height: 42px; }
.combo { margin: 0 2px; background: #000; border-radius: 2px; color: #fff; }
.combo.last { border-radius: 2px 2px 6px 6px; }
.field { display: flex; align-items: center; height: 26px; padding: 0 8px 0 4px; font-weight: 600; }
.field + .field { border-top: 1px solid #777; }
.field::after { content: ""; border: 4px solid transparent; border-top: 5px solid currentColor; border-bottom: 0; }
.field select { height: 24px; }
.faint { color: #75777a; font-weight: 400; }
.geared { padding-right: 2px; }
.geared::after { order: 1; margin-right: 7px; }
.geared button {
  order: 2;
  width: 26px;
  height: 20px;
  display: grid;
  place-items: center;
  border-radius: 2px;
  background: #8b8c8e;
  color: #3d4043;
}
.geared svg { width: 16px; height: 16px; }
.tabs {
  height: 431px;
  display: flex;
  flex-direction: column;
  justify-content: space-between;
}

/* track list */
.tracklist { width: 260px; display: flex; flex-direction: column; background: #10212a; }
.list-head {
  height: 33px;
  display: flex;
  align-items: center;
  gap: 2px;
  padding-left: 48px;
  background: #0d202a;
}
.apart { margin-left: 13px; }
.find { width: 15px; height: 15px; margin-left: 17px; color: #7c878e; }
.key {
  width: 29px;
  height: 20px;
  flex: none;
  display: grid;
  place-items: center;
  overflow: hidden;
  border: 1px solid #2d353b;
  border-radius: 2px;
  background: linear-gradient(#c5ccd2 0 50%, #9da6ad 54%, #b4bcc2);
  box-shadow: 1px 1px 2px rgba(0, 0, 0, .5);
  color: #15191d;
  font: 700 14px/18px "DejaVu Sans", sans-serif;
}
.key svg { width: 26px; height: 18px; }
.key.yellow { background: #efe08a; }
.key.grey { background: #8d8c98; }
.key.green { background: linear-gradient(#2ed858, #17bd3f); }
.key.red { background: linear-gradient(#ee5a62, #d8414b); }
.key.orange { background: #f3a374; color: #5e2d10; }
.key.amber { background: #efbd68; color: #5e3c0c; }
.key.violet { background: #b2a9f7; }
.key.sky { background: #7cb5fb; }
.row {
  flex: none;
  display: flex;
  border-bottom: 1px solid #3a4950;
  overflow: hidden;
}
.strip {
  flex: none;
  width: 38px;
  padding: 5px 4px;
  display: flex;
  justify-content: space-between;
  color: rgba(255, 255, 255, .8);
}
.strip svg { width: 16px; height: 18px; }
.strip b { font-weight: 400; color: rgba(0, 0, 0, .5); }
.magenta { background: #d33be8; }
.meter {
  width: 15px;
  flex: none;
  margin-right: 3px;
  background: #000;
  display: flex;
  flex-direction: column;
  justify-content: flex-end;
  padding: 0 2px 1px 1px;
}
.meter .peak { height: 2px; margin-bottom: 3px; background: #39b895; }
.meter .fill { background: linear-gradient(#2af0b0, #12d9ff) bottom / 100% 107px; }
.chord-row { height: 135px; background: #55666f; border-bottom: 25px solid #475761; }
.chord-ctl { flex: 1; min-width: 0; padding: 5px 0 0 10px; display: flex; flex-direction: column; gap: 6px; overflow: hidden; }
.line { display: flex; gap: 2px; align-items: center; height: 20px; }
.line.inner { padding-left: 67px; gap: 4px; }
.out {
  flex: none;
  margin-left: 5px;
  padding-left: 4px;
  width: 140px;
  height: 20px;
  line-height: 18px;
  border: 1px solid #22292e;
  background: linear-gradient(#b4bec4, #98a3a9);
  color: #0d1114;
  font-weight: 600;
  white-space: nowrap;
}
.split { flex: none; height: 4px; background: #22343d; z-index: 1; }
.stub { height: 14px; background: #55666f; }
.stub .strip { background: #a3afae; }
.stub-ctl { flex: 1; display: flex; gap: 5px; padding-left: 76px; }
.stub-ctl i { width: 30px; height: 5px; background: #9aa5ab; border: 1px solid #22292e; border-top: 0; border-radius: 0 0 2px 2px; }

.folder { height: 110px; background: #55666f; color: #e8edf0; }
.folder .strip { width: 53px; background: #c3bec4; justify-content: flex-end; padding-right: 2px; }
.folder .strip svg { width: 26px; height: 20px; }
.folder.outer { flex: 1; height: auto; border: 0; }
.folder.outer .strip { width: 38px; }
.track { height: 137px; padding-left: 15px; }
.track .controls { background: #c8ced5; color: #14181c; }
.track.audio .controls { background: #55666f; color: #eef1f3; }
.controls {
  flex: 1;
  min-width: 0;
  display: grid;
  grid-template-columns: 60px 1fr;
  grid-auto-rows: 20px;
  gap: 6px 7px;
  padding: 5px 0 0 9px;
  overflow: hidden;
  align-content: start;
}
.mini { display: flex; gap: 4px; align-items: center; white-space: nowrap; min-width: 0; }
.mini.ms { gap: 2px; }
.mini.tight { gap: 1px; }
.mini.second { grid-column: 2; }
.track-name { font-weight: 600; font-size: 15px; }
.light .key, .instrument {
  background: linear-gradient(#eef1f4 0 50%, #c3c9cf 54%, #d9dee2);
}
.light .key.green { background: linear-gradient(#2ed858, #17bd3f); }
.light .key.red { background: linear-gradient(#ee5a62, #d8414b); }
.light .key.sky { background: #7cb5fb; }
.dot {
  width: 22px;
  height: 22px;
  flex: none;
  display: grid;
  place-items: center;
  border: 1px solid #30383e;
  border-radius: 50%;
  background: #c4cbd1;
  color: #0e1215;
  box-shadow: 1px 1px 2px rgba(0, 0, 0, .4);
}
.dot.small { width: 19px; height: 19px; }
.dot svg { width: 17px; height: 17px; }
.dot.armed { background: #e84a55; color: #4a0509; }
.keys-pair { display: flex; gap: 1px; margin-left: 8px; }
.instrument {
  display: flex;
  align-items: center;
  gap: 5px;
  width: 130px;
  flex: none;
  height: 20px;
  padding-left: 3px;
  border: 1px solid #30383e;
  border-radius: 2px;
  color: #14181c;
  font-weight: 600;
  line-height: 18px;
  text-align: left;
}
.instrument svg { width: 14px; height: 14px; }
.rings { width: 22px; height: 14px; }

/* arrangement */
.arrange {
  flex: 1;
  min-width: 0;
  display: flex;
  flex-direction: column;
  position: relative;
  border-left: 2px solid #2c3a42;
  border-right: 2px solid #101820;
  background: #cdd6dc;
}
.gridlines { position: absolute; inset: 33px 0 0; width: 100%; height: calc(100% - 33px); }
.bars {
  display: grid;
  grid-template-columns: minmax(0, 400fr) repeat(4, minmax(0, 785fr)) minmax(0, 564fr);
}
.ruler { height: 33px; background: #0d202a; color: #c5d8e2; position: relative; }
.ruler .loop { grid-area: 1 / 2 / 2 / 6; background: #457d99; }
.ruler svg { grid-area: 1 / 1 / 2 / -1; width: 100%; height: 33px; }
.ruler span { grid-row: 1; align-self: end; padding-left: 1px; line-height: 16px; z-index: 1; }
.lane {
  flex: none;
  height: 137px;
  padding: 2px 0 1px;
  border-bottom: 1px solid #b4bfc5;
  position: relative;
}
.chord-lane { height: 135px; border: 0; grid-template-rows: 82px 4px 23px; padding-bottom: 0; }
.chord {
  grid-row: 1;
  display: flex;
  align-items: baseline;
  padding-left: 9px;
  line-height: 78px;
  font-family: "Liberation Serif", serif;
  font-size: 68px;
  color: #f3d6f5;
  text-shadow: 1px 1px 1px #7a7a7a;
  border: 1px solid #8a1c9c;
  overflow: hidden;
  background:
    repeating-linear-gradient(90deg, transparent 0 24px, rgba(90, 0, 110, .15) 24px 25px),
    linear-gradient(#de76f0, #c23fdc 55%, #bd30d6);
}
.chord small { font-size: 62px; }
.chord .flat { font: 58px/60px "DejaVu Sans", sans-serif; }
.chord.none { background: linear-gradient(#4a3c4e, #0c0810 60%); border-color: #000; }
.c7 { grid-column: 2; } .c8 { grid-column: 3; } .c9 { grid-column: 4; } .c10 { grid-column: 5; }
.w170 { width: 170px; } .w64 { width: 64px; } .w92 { width: 92px; } .w73 { width: 73px; }
.scale-band { grid-area: 3 / 1 / 4 / -1; background: rgba(210, 120, 220, .35); }
.stub-lane { height: 14px; }
.folder-lane { height: 110px; }
.clip {
  grid-row: 1;
  position: relative;
  border: 1px solid #333;
  min-width: 0;
  box-shadow: inset 0 1px rgba(255, 255, 255, .4);
}
.clip-name {
  position: absolute;
  left: 5px;
  top: 3px;
  font-size: 15px;
  font-weight: 600;
  color: rgba(255, 255, 255, .85);
}
.clip.dark-name .clip-name { color: #48525e; }
.clip svg { width: 100%; height: 100%; }
.folder-clip {
  grid-column: 2 / 6;
  padding: 6px 1px 0;
  display: flex;
  flex-direction: column;
  gap: 3px;
  background: linear-gradient(#555d64 0 40px, #0a0e14 60px);
  border-color: #70787e;
}
.folder-clip .clip-name { background: #5b6268; padding: 0 6px 0 4px; left: 1px; top: 3px; color: #fff; }
.part { display: block; height: 13px; flex: none; }
.part.grey { background: #b1b8bf; }
.part.pink { background: #e559c0; }
.part.lilac { background: #8578e0; }
.part.blue { background: #6583dc; }
.part.cyan { background: #3d9cd6; }
.part.violet { background: #9549d6; }
.quarters { display: grid; grid-template-columns: repeat(4, 1fr); height: 13px; }
.q1 { grid-column: 1; } .q2 { grid-column: 2; } .q3 { grid-column: 3; } .q4 { grid-column: 4; }

.clip.drums { background: linear-gradient(#bdc2c9, #8e989d); border-color: #4e585e; }
.clip.epiano { background: linear-gradient(#f573d8, #db3cb4 55%, #d527a9); border-color: #8c1a76; }
.clip.pad { background: linear-gradient(#a396f4, #6f5fd8 65%, #6858d6); border-color: #3a2a9c; }
.clip.bass { background: linear-gradient(#90a4f6, #5878da 70%, #5070d6); border-color: #2a3f9a; }
.clip.soft { background: linear-gradient(#74c6f2, #2f98d2 65%, #2790cc); border-color: #1a6d9c; }
.clip.lead { background: linear-gradient(#c287f8, #9a4cd8 65%, #9443d2); border-color: #5f2590; }
.clip .handle { position: absolute; bottom: 2px; width: 7px; height: 9px; background: #0c3450; }
.handle.l { left: 1px; }
.handle.r { right: 1px; }
.lane.rest { flex: 1; height: auto; border: 0; }

.playhead {
  position: absolute;
  top: 0;
  bottom: 0;
  left: 1128px;
  width: 3px;
  background: #0a0d12;
  border-right: 1px solid #fff;
}
.cursor { position: absolute; left: 1480px; top: 729px; width: 14px; height: 22px; }

/* chord editor window */
.chord-editor {
  position: absolute;
  left: 856px;
  top: 117px;
  width: 454px;
  padding: 7px 6px 8px;
  background: #000;
  z-index: 2;
  box-shadow: 0 3px 8px rgba(0, 0, 0, .35);
}
.ed-tabs { display: flex; height: 29px; border-radius: 7px 7px 0 0; overflow: hidden; }
.ed-tabs button {
  flex: 1;
  padding-left: 12px;
  text-align: left;
  font-size: 15px;
  font-weight: 600;
  color: #15181c;
  background: linear-gradient(#9ea4a9, #b0b6ba);
  border-left: 1px solid #333;
}
.ed-tabs .active { flex: none; width: 161px; background: linear-gradient(#e2e7ea, #fff); border: 0; }
.ed-body {
  border: 3px solid #f4f4f6;
  border-radius: 0 0 8px 8px;
  padding: 15px 8px 8px;
  background: #020206;
}
.ed-cols {
  display: grid;
  grid-template-columns: repeat(4, 1fr);
  height: 331px;
  color: #dcdcde;
  padding-left: 4px;
}
.ed-cols ul { list-style: none; margin: 0 6px; padding: 0; }
.ed-cols li { border-bottom: 1px solid #2f2f33; height: 27px; }
.ed-cols li:last-child { border: 0; }
.ed-cols button { width: 100%; line-height: 25px; font-size: 15px; }
.ed-cols .dim { color: #55555a; }
.piano { width: 100%; height: 65px; }
.midi-in {
  display: flex;
  align-items: center;
  gap: 8px;
  height: 44px;
  margin-top: 3px;
  padding: 3px 10px 0 6px;
  background: #6f757a;
  color: #e0e3e5;
  font-size: 15px;
}
.midi-in button { width: 27px; height: 27px; display: grid; place-items: center; border-radius: 3px; background: #f5f6f7; color: #000; }
.midi-in span { flex: 1; }
.midi-in svg { width: 18px; height: 18px; color: #111; }

/* transport panel */
.transport {
  position: absolute;
  left: 343px;
  bottom: 66px;
  width: 1171px;
  height: 92px;
  z-index: 3;
  display: flex;
  gap: 7px;
  padding: 6px 0 7px;
  border: 1px solid #1e2a30;
  background: linear-gradient(#72828a, #55656d 60%, #4a5860);
  box-shadow: 0 5px 12px rgba(0, 0, 0, .5);
  font: 13px/18px "Noto Sans", sans-serif;
  color: #a0a4a8;
}
.grip { width: 18px; flex: none; border-right: 1px solid #2d3a42; display: flex; justify-content: center; padding-top: 4px; }
.grip.right { border: 0; border-left: 1px solid #2d3a42; flex: 1; }
.grip i { border: 6px solid transparent; border-bottom: 7px solid #8e9ca4; border-top: 0; height: 0; }
.panel {
  background: #020204;
  border: 1px solid #89969c;
  border-radius: 3px;
  overflow: hidden;
  flex: none;
  display: flex;
}
.panel b { font-weight: 400; color: #d4d8da; }
.tag {
  min-width: 26px;
  padding: 0 3px;
  background: #44545e;
  color: #dfe5e8;
  font: 13px/17px Roboto, sans-serif;
  display: grid;
  place-items: center;
}
.tag svg { width: 20px; height: 15px; }
.tag.lit { background: #dfdfe3; color: #111; }
.cpu { width: 33px; flex-direction: column; justify-content: space-between; padding: 2px 12px 1px 2px; }
.cpu .peak { height: 5px; background: #e8404a; }
.cpu .load { height: 12px; background: #2fae72; }
.history { width: 152px; flex-direction: column; justify-content: space-between; margin-left: 2px; }
.history div { display: flex; justify-content: space-between; padding: 3px 6px 3px 3px; height: 28px; line-height: 22px; font-size: 14px; }
.history svg { width: 17px; height: 18px; color: #3a3a3e; }
.history .foot { height: 20px; padding: 1px; gap: 6px; justify-content: flex-start; border-top: 1px solid #3a3a3e; line-height: 18px; font-family: Roboto, sans-serif; }
.locators { width: 154px; flex-direction: column; justify-content: space-between; }
.locators > div { display: flex; height: 19px; }
.locators > div:nth-child(3) { border-top: 1px solid #3a3a3e; }
.locators .tag.big { font-size: 18px; }
.pos { flex: 1; display: flex; justify-content: flex-end; gap: 11px; padding-right: 3px; color: #d8dadc; font-size: 14px; }
.pos i { font-style: normal; }
.pos i:last-child { padding-left: 7px; }
.off .pos { color: #56585c; padding-right: 5px; }
.deck { width: 361px; flex: none; display: flex; flex-direction: column; justify-content: space-between; }
.deck .transport-keys { padding: 3px; height: 38px; }
.deck .transport-keys button { flex: 50; width: auto; height: 30px; }
.deck .transport-keys .w25 { flex: 25; }
.time { height: 39px; align-items: center; padding: 0 4px 6px; gap: 6px; }
.plus { font-size: 20px; width: 14px; line-height: 16px; padding-top: 5px; }
.plus i { display: block; width: 10px; height: 2px; background: #777; margin-bottom: 3px; }
.plus .lit { width: 13px; height: 5px; background: #25e09a; margin: 0; }
.now { flex: 1; display: flex; justify-content: flex-end; gap: 14px; font-size: 20px; }
.now b { color: #e6e8ea; }
.quaver { width: 22px; height: 20px; color: #85888c; }
.updown { width: 12px; height: 28px; color: #85888c; }
.clock { font-size: 15px; padding-left: 22px; }
.watch { width: 16px; height: 16px; color: #8c9094; }
.click { width: 153px; flex-direction: column; justify-content: space-between; }
.click > div { display: flex; height: 19px; gap: 6px; align-items: center; }
.click .ruled { border-top: 1px solid #2e2e32; }
.click .tag { width: 47px; }
.click .tag.icon { width: 27px; margin-left: auto; }
.click b { font: 14px/18px Roboto, sans-serif; }
.click em { font-style: normal; font-size: 15px; margin-left: auto; padding-right: 2px; color: #85888c; }
.marker { width: 124px; flex-direction: column; }
.marker .head { display: flex; justify-content: space-between; padding: 1px 5px 1px 1px; border-bottom: 1px solid #3a3a3e; font: 13px/17px Roboto, sans-serif; color: #777a7e; }
.marker .tag { width: 46px; }
.nums { flex: 1; display: grid; grid-template-columns: repeat(5, 1fr); font: 14px/18px Roboto, sans-serif; color: #d0d4d6; }
.activity { width: 20px; align-items: flex-end; padding: 2px 3px 2px 10px; }
.activity i { flex: 1; height: 12px; background: #1fc4e8; }
.output {
  width: 54px;
  display: grid;
  grid-template: 16px 1fr / 28px 8px 8px;
  gap: 8px 1px;
  padding: 2px 2px 1px;
}
.clipled { grid-column: 2 / 4; background: #f00; }
.output .left, .output .right { background: linear-gradient(#25e08a, #20dfe8 90%); }
.output .left { grid-column: 2; }
.fader { width: 13px; flex: none; border: 2px solid #18242b; border-radius: 7px; background: #596870; }
.fader i { display: block; width: 9px; height: 9px; border-radius: 50%; background: #fff; margin-top: 42px; }

/* bottom bars */
.scrollbar {
  flex: none;
  height: 15px;
  display: flex;
  background: #adaeb2;
  color: #14181c;
  line-height: 13px;
}
.list-foot { width: 477px; padding: 0 6px 0 219px; display: flex; justify-content: space-between; background: #10212a; color: #dde3e6; }
.list-foot i { border: 4px solid transparent; border-top: 5px solid #fff; border-bottom: 0; height: 0; margin-top: 8px; }
.scrollbar > button { width: 20px; border-right: 1px solid #555; font-size: 18px; line-height: 12px; }
.rail { flex: 1; padding-left: 35px; border-top: 1px solid #777; }
.rail i { display: block; width: 31px; height: 14px; border: 1px solid #222; background: linear-gradient(#8f969b, #5b646a); }
.zoomer { width: 126px; display: flex; align-items: center; gap: 5px; padding: 0 3px 0 6px; border-left: 2px solid #eee; font-weight: 700; }
.zoomer .tri { border-top-color: #111; }
.rod { flex: 1; height: 1px; background: #333; display: flex; justify-content: center; align-items: center; }
.rod i { width: 16px; height: 14px; background: #555; clip-path: polygon(50% 0, 100% 100%, 0 100%); }
.base { flex: none; height: 8px; overflow: hidden; background: #000; padding-left: 964px; }
.base i { display: block; width: 28px; height: 28px; border-radius: 50%; background: #eee; }
```
FILE: script.js
```js
const BAR = 392.5;      // width of one bar in drawing units
const CLIP_H = 133;

const icon = (name) => `<svg><use href="#i-${name}"/></svg>`;
const key = (name, label, cls = '') => `<button class="key ${cls}" aria-label="${label}">${icon(name)}</button>`;

/* ---------- clips ---------- */

// every note is [x, width, y, height]
function chordHits(bar, beats, rows) {
  const out = [];
  beats.forEach((b) => rows.forEach((y) => out.push([bar * BAR + b * BAR / 4, 41, y, 5])));
  return out;
}

const epiano = [
  ...chordHits(0, [0, 1, 2, 3], [35, 59, 98]),
  ...chordHits(1, [0, 1, 2, 3], [41, 64, 104]),
  ...chordHits(2, [0, 1, 2, 3], [48, 71, 111]),
  ...chordHits(3, [0, 1, 2, 3], [47, 68, 111])
];

const pad = [
  [2, 329, 46, 4], [2, 329, 60, 4], [2, 329, 69, 4], [2, 329, 77, 4],
  [343, 430, 16, 4], [343, 430, 60, 4], [343, 430, 69, 4], [343, 430, 77, 4],
  [786, 330, 60, 4], [786, 330, 69, 4], [786, 330, 77, 4], [786, 330, 112, 4],
  [1128, 430, 56, 4], [1128, 430, 69, 4], [1128, 430, 77, 4], [1128, 430, 86, 4]
];

const bass = [
  [2, 249, 86, 7], [293, 75, 86, 7], [392, 344, 95, 7], [780, 294, 95, 7],
  [1080, 27, 104, 7], [1128, 344, 104, 7], [1472, 95, 45, 7]
];

const eighths = (y, h) => [...Array(8).keys()].map((i) => [24 + i * 49, i === 7 ? 23 : 25, y, h]);

const softA = [...eighths(60, 7), [2, 388, 75, 6]];
const softB = [...eighths(18, 12), [2, 388, 45, 12]];
softB[0] = [24, 25, 26, 4];

const leadA = [[2, 46, 71, 7], [48, 14, 26, 7], [122, 9, 26, 7], [196, 9, 26, 7]];
const leadB = [[53, 9, 104, 7], [123, 11, 104, 7], [197, 10, 104, 7], [343, 26, 70, 7], [368, 23, 45, 7]];

const noteColor = { epiano: '#73005f', pad: '#2a14ac', bass: '#12309c', soft: '#1f5f85', lead: '#55139a' };

function sixteenths(bars) {
  let d = '';
  for (let i = 1; i < bars * 16; i++) d += `M${i * BAR / 16} 12V${CLIP_H - 4}`;
  return `<path d="${d}" stroke="#000" stroke-opacity=".1" fill="none"/>`;
}

// lower notes are drawn darker
function noteSvg(kind, bars, notes) {
  const rects = notes.map(([x, w, y, h]) => {
    const o = Math.min(0.95, 0.3 + y / 140).toFixed(2);
    return `<rect x="${x}" y="${y}" width="${w}" height="${h}" fill="${noteColor[kind]}" opacity="${o}"/>`;
  }).join('');
  return `<svg viewBox="0 0 ${bars * BAR} ${CLIP_H}" preserveAspectRatio="none">${sixteenths(bars)}${rects}</svg>`;
}

// drum hits in one bar: [start, length, up, down]
const hits = [
  [0, 20, 24, 26], [49, 16, 9, 11], [97, 19, 20, 19], [129, 6, 2, 2], [147, 13, 10, 13],
  [171, 22, 19, 19], [196, 12, 8, 10], [221, 21, 19, 19], [246, 10, 9, 12], [273, 4, 2, 2],
  [293, 20, 20, 19], [342, 14, 9, 13], [367, 23, 16, 18]
];

function wave(cy) {
  let top = `M0 ${cy}`;
  let low = '';
  for (let b = 0; b < 4; b++) {
    hits.forEach(([x, len, up, down], n) => {
      const pts = [];
      for (let i = 0; i <= len; i += 1.5) {
        const env = i < 2 ? 0.8 : Math.pow(1 - i / len, 1.2);
        const jag = len > 19 ? 0.65 + 0.35 * Math.sin(i * 2.7 + n) : 0.9 + 0.1 * Math.sin(i * 3);
        pts.push([b * BAR + x + i + 1, env * jag]);
      }
      const s = pts[0][0];
      const e = pts[pts.length - 1][0];
      top += `L${s} ${cy - 1}` + pts.map(([px, a]) => `L${px} ${(cy - 1 - a * up).toFixed(1)}`).join('') + `L${e} ${cy - 1}`;
      low = `L${e} ${cy + 1}` + pts.reverse().map(([px, a]) => `L${px} ${(cy + 1 + a * down).toFixed(1)}`).join('') + `L${s} ${cy + 1}` + low;
    });
  }
  return `${top}L${BAR * 4} ${cy}${low}Z`;
}

const waveSvg = `<svg viewBox="0 0 ${BAR * 4} ${CLIP_H}" preserveAspectRatio="none">${sixteenths(4)}
  <path d="${wave(35)}" fill="#7f868c" stroke="#4a5156"/>
  <path d="${wave(100)}" fill="#566067" stroke="#11181c"/></svg>`;

/* ---------- tracks ---------- */

const tracks = [
  { type: 'folder', name: 'hip hop' },
  { type: 'audio', no: 3, name: '04 098.5 2 dru', color: '#9b98a2', level: 106,
    clips: [{ kind: 'drums', from: 1, bars: 4, name: '04 098.5 2 drums01', dark: true }] },
  { no: 4, name: 'Epiano', inst: 'Early 70s E-P', color: '#e92bb8', level: 60, insert: true,
    clips: [{ kind: 'epiano', from: 1, bars: 4, name: '03 Verse B', notes: epiano }] },
  { no: 5, name: 'Pad', inst: 'Analog Pad', color: '#7868f0', level: 39,
    clips: [{ kind: 'pad', from: 1, bars: 4, name: '02 Vers A', notes: pad }] },
  { no: 6, name: 'Bass', inst: 'Club Bass', color: '#5c84f2', level: 84, insert: true,
    clips: [{ kind: 'bass', from: 1, bars: 4, name: '02 Vers A', dark: true, notes: bass }] },
  { no: 7, name: 'Soft Lead', inst: 'Duck Lead', color: '#38a9ee', level: 40,
    clips: [
      { kind: 'soft', from: 2, bars: 1, name: '02 Vers A', dark: true, notes: softA },
      { kind: 'soft', from: 4, bars: 1, name: '02 Vers A', dark: true, notes: softB, selected: true }
    ] },
  { no: 8, name: 'LeadSynth', inst: 'Lead', color: '#a44df2', level: 73,
    clips: [
      { kind: 'lead', from: 1, bars: 1, name: '02 Verse A', notes: leadA },
      { kind: 'lead', from: 3, bars: 1, name: '02 Verse A', notes: leadB }
    ] },
  { type: 'folder', name: 'so', outer: true }
];

const muteSolo = '<div class="mini ms"><button class="key">m</button><button class="key">S</button></div>';
const readWrite = '<div class="keys-pair"><button class="key green">R</button><button class="key red">W</button></div>';
const recMon = (armed) => `<button class="dot ${armed ? 'armed' : ''}" aria-label="Record enable">${icon('rec')}</button>
  <button class="dot small" aria-label="Monitor">${icon('spk')}</button>`;

function folderRow(t) {
  return `<div class="row folder ${t.outer ? 'outer' : ''}">
    <div class="strip">${icon(t.outer ? 'folder-shut' : 'folder')}</div>
    <div class="controls">
      ${muteSolo}<div class="mini track-name">${t.name}</div>
      <div class="mini">${key('equal', 'Group editing')}</div>
      <div class="mini">${recMon(false)}<div class="keys-pair">${key('lock', 'Lock')}</div></div>
    </div>
    <div class="meter"></div>
  </div>`;
}

function trackRow(t) {
  const audio = t.type === 'audio';
  const row3 = audio
    ? `<div class="mini tight second"><button class="dot" aria-label="Edit channel">${icon('e')}</button>${key('ins', 'Inserts')}${key('dia', 'Equalizers')}${key('snd', 'Sends')}</div>`
    : `<div class="mini second"><button class="dot" aria-label="Edit channel">${icon('e')}</button>${key('ms', 'Instrument')}${key('shelf', 'Lanes')}${key('ins', 'Inserts', t.insert ? 'sky' : '')}</div>`;
  const first = audio ? key('note', 'Musical mode', 'amber') : key('dagger', 'Drum map');
  const last = audio
    ? '<div class="mini second"><svg class="rings"><use href="#i-rings"/></svg></div>'
    : `<div class="mini second"><button class="instrument">${icon('program')}${t.inst}</button></div>`;
  return `<div class="row track ${audio ? 'audio' : 'light'}">
    <div class="strip" style="background:${t.color}">${icon(audio ? 'wavemark' : 'keys')}<b>${t.no}</b></div>
    <div class="controls">
      ${muteSolo}<div class="mini track-name">${t.name}</div>
      <div class="mini second">${recMon(!audio)}${readWrite}</div>
      ${row3}
      <div class="mini second">${first}${key('lock', 'Lock')}${key('lanes', 'Lane display')}</div>
      ${last}
    </div>
    <div class="meter"><i class="peak"></i><i class="fill" style="height:${t.level}px"></i></div>
  </div>`;
}

function clipHtml(c) {
  const handles = c.selected ? '<i class="handle l"></i><i class="handle r"></i>' : '';
  return `<div class="clip ${c.kind} ${c.dark ? 'dark-name' : ''}" style="grid-column:${c.from + 1} / span ${c.bars}">
    ${c.kind === 'drums' ? waveSvg : noteSvg(c.kind, c.bars, c.notes)}<span class="clip-name">${c.name}</span>${handles}</div>`;
}

const list = document.getElementById('tracklist');
const playhead = document.querySelector('.playhead');
tracks.forEach((t) => {
  list.insertAdjacentHTML('beforeend', t.type === 'folder' ? folderRow(t) : trackRow(t));
  if (t.clips) playhead.insertAdjacentHTML('beforebegin', `<div class="lane bars">${t.clips.map(clipHtml).join('')}</div>`);
});
playhead.insertAdjacentHTML('beforebegin', '<div class="lane rest"></div>');

/* ---------- ruler and grid ---------- */

const LEFT = 200;
const WIDTH = 2052;

let ticks = '';
for (let i = -8; i < 92; i++) {
  const x = LEFT + i * BAR / 16;
  if (x < 0 || x > WIDTH) continue;
  ticks += `M${x} 0V${i % 16 === 0 ? 11 : i % 4 === 0 ? 7 : 3}`;
}
const right = LEFT + 4 * BAR;
document.getElementById('ruler').innerHTML = `<div class="loop"></div>
  <svg viewBox="0 0 ${WIDTH} 33" preserveAspectRatio="none"><path d="${ticks}" stroke="#b7d2e0" fill="none"/>
  <path d="M${LEFT} 0h12l-12 12zM${right} 0h-12l12 12z" fill="#fff"/></svg>` +
  [7, 8, 9, 10, 11].map((n, i) => `<span style="grid-column:${i + 2}">${n}</span>`).join('');

let beats = '';
let barLines = '';
for (let i = -2; i < 23; i++) {
  const seg = `M${LEFT + i * BAR / 4} 0V100`;
  if (i % 4 === 0) barLines += seg;
  else beats += seg;
}
const grid = document.getElementById('gridlines');
grid.setAttribute('viewBox', `0 0 ${WIDTH} 100`);
grid.innerHTML = `<rect x="${LEFT}" width="${BAR * 4}" height="100" fill="#c9d6de"/>
  <path d="${beats}" stroke="#bfcbd2" stroke-opacity=".6"/><path d="${barLines}" stroke="#a9b6bd"/>`;

/* ---------- chord editor ---------- */

const roots = ['C', 'C#', 'D', 'D#', 'E', 'F', 'F#', 'G', 'G#', 'A', 'A#', 'B'];
const columns = [
  roots,
  ['maj', 'min', 'dim', 'sus4', 'sus2', 'aug'],
  ['7', 'j7', 'b9', '9', '#9', '11', 'b5/#11', '#5/b13', '6/13'],
  roots
];
document.getElementById('chordCols').innerHTML = columns.map((col) =>
  `<ul>${col.map((c) => `<li><button class="${c === '11' ? 'dim' : ''}">${c}</button></li>`).join('')}</ul>`).join('');

const blackKeys = [10, 32, 53, 87, 108, 141, 163, 184, 217, 239, 272, 293, 314, 348, 369, 403];
document.getElementById('piano').innerHTML = '<rect width="419" height="65" fill="#a3a2a6"/>' +
  blackKeys.map((x) => `<rect x="${x}" width="12" height="37" fill="#0b0b0f"/>`).join('');
```
